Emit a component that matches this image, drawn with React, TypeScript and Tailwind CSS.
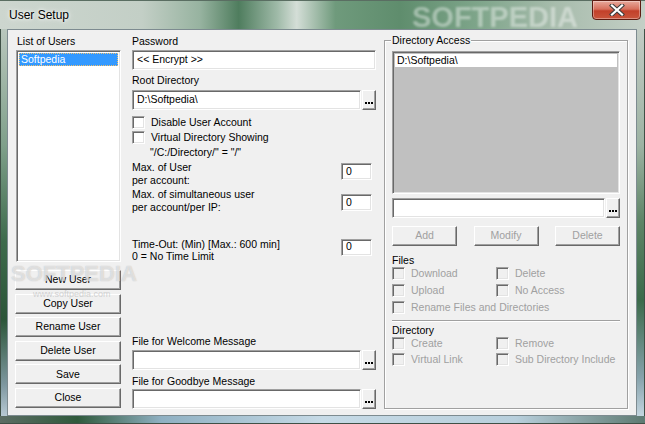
import React from "react";

const raised =
  "border border-t-white border-l-white border-r-[#696969] border-b-[#696969] shadow-[inset_-1px_-1px_0_#a0a0a0] bg-[#f0f0f0]";
const sunken =
  "border border-t-[#a0a0a0] border-l-[#a0a0a0] border-r-white border-b-white shadow-[inset_1px_1px_0_#696969,inset_-1px_-1px_0_#e3e3e3]";

function Btn({ label, disabled, className = "" }: { label: string; disabled?: boolean; className?: string }) {
  return (
    <div
      className={`relative z-10 flex items-center justify-center ${raised} ${disabled ? "text-[#a0a0a0]" : "text-black"} ${className}`}
    >
      {label}
    </div>
  );
}

function Dots() {
  return (
    <div className={`w-[14px] h-[20px] shrink-0 flex items-end justify-center pb-[5px] ${raised}`}>
      <div className="flex gap-[1px]">
        <div className="w-[2px] h-[2px] bg-black" />
        <div className="w-[2px] h-[2px] bg-black" />
        <div className="w-[2px] h-[2px] bg-black" />
      </div>
    </div>
  );
}

function Input({ value = "", className = "" }: { value?: string; className?: string }) {
  return (
    <div className={`bg-white flex items-center pl-[4px] ${sunken} ${className}`}>
      <span className="whitespace-nowrap">{value}</span>
    </div>
  );
}

function FileRow({ value = "", w = "w-[229px]" }: { value?: string; w?: string }) {
  return (
    <div className="flex h-[20px] gap-[1px]">
      <Input value={value} className={`${w} h-[20px]`} />
      <Dots />
    </div>
  );
}

function Check({ label, disabled }: { label: string; disabled?: boolean }) {
  return (
    <div className="flex items-center h-[13px]">
      <div
        className={`w-[13px] h-[13px] shrink-0 ${sunken} ${disabled ? "bg-[#f0f0f0]" : "bg-white"}`}
      />
      <span className={`ml-[6px] whitespace-nowrap ${disabled ? "text-[#a0a0a0]" : "text-black"}`}>{label}</span>
    </div>
  );
}

function CloseX() {
  return (
    <svg width="16" height="12" viewBox="0 0 16 12">
      <path d="M3 1.5 L13 10.5 M13 1.5 L3 10.5" stroke="#3b3b3b" strokeWidth="4.2" strokeLinecap="square" />
      <path d="M3 1.5 L13 10.5 M13 1.5 L3 10.5" stroke="#ffffff" strokeWidth="2.2" strokeLinecap="square" />
    </svg>
  );
}

export default function App() {
  return (
    <div className="w-[645px] h-[424px] flex flex-col overflow-hidden relative bg-[#9fb5a6] font-['Liberation_Sans',Arial,sans-serif] text-[10.5px] text-black">
      {/* Title bar */}
      <div className="h-[29px] shrink-0 relative flex items-center pl-[9px] bg-[linear-gradient(90deg,#cdd6cf_0%,#c3cfc6_22%,#97b3a0_31%,#4f7d5e_37%,#9fbaa8_43%,#d4ded7_46%,#6f9a7c_52%,#5f8d6d_62%,#7ea58a_74%,#a7bcac_86%,#c4cfc6_100%)] border-t border-[#5a6e62]">
        <span className="text-[12px] text-black [text-shadow:0_0_6px_#ffffff,0_0_3px_#ffffff] relative z-10">User Setup</span>
        <div className="absolute left-[412px] top-[1px] text-[29px] font-bold tracking-[0px] text-white/40 blur-[1px] select-none leading-[30px]">
          SOFTPEDIA
        </div>
        <div className="absolute left-[592px] top-[-1px] w-[49px] h-[20px] rounded-b-[4px] border border-[#5c1c12] bg-[linear-gradient(180deg,#e8a99c_0%,#d7705d_45%,#c2402a_55%,#c9553c_100%)] flex items-center justify-center shadow-[inset_0_0_0_1px_rgba(255,255,255,0.35)]">
          <CloseX />
        </div>
      </div>

      <div className="flex flex-1 min-h-0">
        {/* Left frame */}
        <div className="w-[7px] shrink-0 bg-[linear-gradient(180deg,#b9c7bd_0%,#7fa08a_30%,#3d6a4b_55%,#2b5538_75%,#7f98a0_92%,#b7c9d3_100%)] border-l border-[#3f5046]" />

        {/* Client area */}
        <div className="w-[630px] shrink-0 bg-[#f0f0f0] border border-[#7d8b90] flex pl-[7px] pt-[4px] relative">
          {/* watermark */}
          <div className="absolute left-[3px] top-[232px] pointer-events-none select-none z-20">
            <div className="text-[22px] font-bold tracking-[0px] text-white/55 [text-shadow:0_0_1px_rgba(120,120,120,0.5)] leading-[24px]">SOFTPEDIA</div>
            <div className="mt-[3px] pl-[22px] text-[9px] leading-[10px] text-[#b8b8b8]/60">www.softpedia.com</div>
          </div>

          {/* Left column */}
          <div className="w-[106px] shrink-0 flex flex-col">
            <div className="h-[14px] leading-[14px] pl-[2px]">List of Users</div>
            <div className={`mt-[2px] h-[212px] bg-white ml-[1px] p-[2px] ${sunken}`}>
              <div className="h-[13px] bg-[#3399ff] text-white leading-[13px] pl-[2px] outline outline-1 outline-dotted outline-[#f0c070] -outline-offset-1">
                Softpedia
              </div>
            </div>
            <div className="mt-[8px] flex flex-col gap-[3.6px]">
              <Btn label="New User" className="h-[20px]" />
              <Btn label="Copy User" className="h-[20px]" />
              <Btn label="Rename User" className="h-[20px]" />
              <Btn label="Delete User" className="h-[20px]" />
              <Btn label="Save" className="h-[20px]" />
              <Btn label="Close" className="h-[20px]" />
            </div>
          </div>

          {/* Middle column */}
          <div className="w-[244px] ml-[11px] shrink-0 flex flex-col">
            <div className="h-[14px] leading-[14px]">Password</div>
            <Input value="<< Encrypt >>" className="mt-[2px] h-[20px] w-[244px]" />
            <div className="mt-[3px] h-[14px] leading-[14px]">Root Directory</div>
            <div className="mt-[3px]">
              <FileRow value="D:\Softpedia\" />
            </div>
            <div className="mt-[6px]">
              <Check label="Disable User Account" />
            </div>
            <div className="mt-[2px]">
              <Check label="Virtual Directory Showing" />
            </div>
            <div className="mt-[2px] h-[13px] leading-[13px] pl-[18px]">"/C:/Directory/" = "/"</div>

            <div className="mt-[2px] h-[25px] flex justify-between">
              <div className="leading-[12.5px]">
                <div>Max. of User</div>
                <div>per account:</div>
              </div>
              <Input value="0" className="mt-[2px] h-[17px] w-[31px] mr-[4px] pl-[3px]" />
            </div>
            <div className="mt-[2px] h-[25px] flex justify-between">
              <div className="leading-[12.5px]">
                <div>Max. of simultaneous user</div>
                <div>per account/per IP:</div>
              </div>
              <Input value="0" className="mt-[6px] h-[17px] w-[31px] mr-[4px] pl-[3px]" />
            </div>
            <div className="mt-[24.5px] h-[25px] flex justify-between">
              <div className="leading-[12.5px]">
                <div>Time-Out: (Min) [Max.: 600 min]</div>
                <div>0 = No Time Limit</div>
              </div>
              <Input value="0" className="mt-[1px] h-[17px] w-[31px] mr-[4px] pl-[3px]" />
            </div>

            <div className="mt-[71.5px] h-[14px] leading-[14px]">File for Welcome Message</div>
            <div className="mt-[2px]">
              <FileRow />
            </div>
            <div className="mt-[4px] h-[14px] leading-[14px]">File for Goodbye Message</div>
            <div className="mt-[1px]">
              <FileRow />
            </div>
          </div>

          {/* Right group box */}
          <div className="ml-[8px] mt-[6px] w-[244px] h-[369px] shrink-0 relative border border-[#a0a0a0] shadow-[1px_1px_0_#ffffff,inset_1px_1px_0_#ffffff] pt-[10px] px-[7px] flex flex-col">
            <div className="absolute -top-[8px] left-[6px] bg-[#f0f0f0] px-[1px] leading-[14px]">Directory Access</div>
            <div className={`h-[143px] bg-[#c0c0c0] p-[2px] ${sunken}`}>
              <div className="h-[13px] bg-white leading-[13px] pl-[2px]">D:\Softpedia\</div>
            </div>
            <div className="mt-[4px]">
              <FileRow w="w-[213px]" />
            </div>
            <div className="mt-[8px] flex justify-between">
              <Btn label="Add" disabled className="w-[65px] h-[20px]" />
              <Btn label="Modify" disabled className="w-[65px] h-[20px]" />
              <Btn label="Delete" disabled className="w-[65px] h-[20px]" />
            </div>
            <div className="mt-[7px] h-[14px] leading-[14px]">Files</div>
            <div className="grid grid-cols-[104px_1fr] gap-y-[4px]">
              <Check label="Download" disabled />
              <Check label="Delete" disabled />
              <Check label="Upload" disabled />
              <Check label="No Access" disabled />
              <div className="col-span-2">
                <Check label="Rename Files and Directories" disabled />
              </div>
            </div>
            <div className="mt-[6px] h-[2px] border-t border-[#a0a0a0] border-b border-b-white" />
            <div className="mt-[1px] h-[14px] leading-[14px]">Directory</div>
            <div className="grid grid-cols-[104px_1fr] gap-y-[3px]">
              <Check label="Create" disabled />
              <Check label="Remove" disabled />
              <Check label="Virtual Link" disabled />
              <Check label="Sub Directory Include" disabled />
            </div>
          </div>
        </div>

        {/* Right frame */}
        <div className="w-[8px] shrink-0 bg-[linear-gradient(180deg,#c2ccc5_0%,#9db3a3_30%,#5d8466_50%,#3c6a4a_70%,#86a2ab_90%,#c3d5df_100%)] border-r border-[#3f5046]" />
      </div>

      {/* Bottom frame */}
      <div className="h-[8px] shrink-0 bg-[linear-gradient(90deg,#5c6d64_0%,#2f5a3c_12%,#8fb0c2_25%,#c6dae6_50%,#b8cfdc_80%,#5e7a72_100%)] border-b border-[#3f5046]" />
    </div>
  );
}
